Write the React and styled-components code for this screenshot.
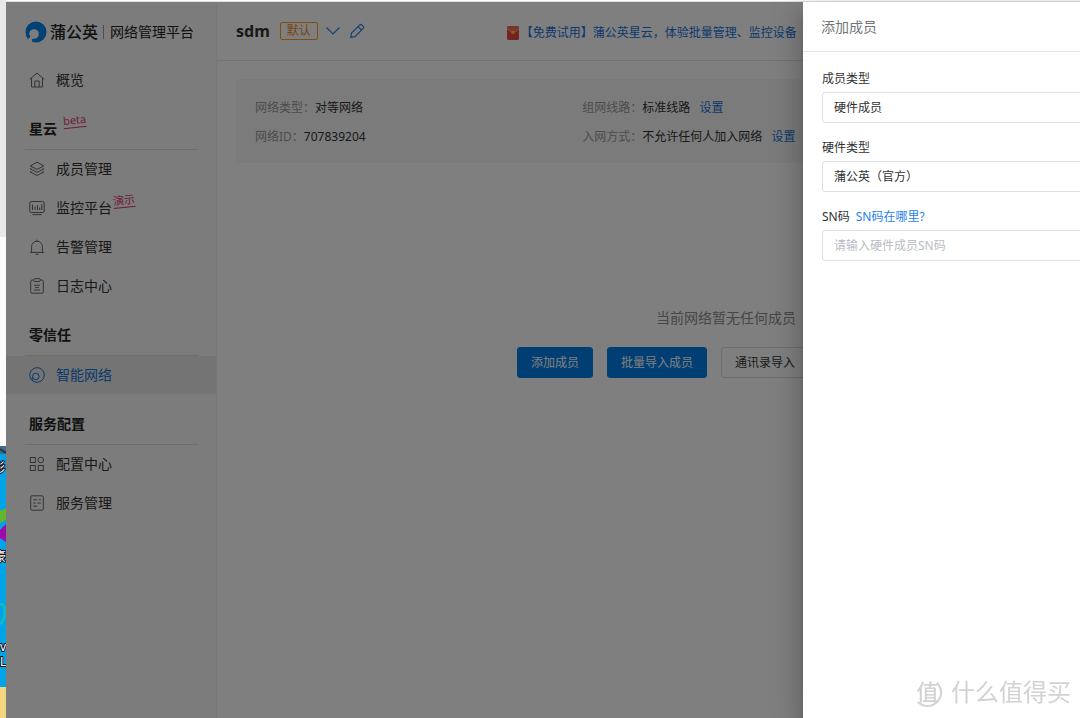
import React, { useState } from "react";
import styled, { createGlobalStyle } from "styled-components";

const GlobalStyle = createGlobalStyle`
  * {
    box-sizing: border-box;
  }

  html,
  body {
    margin: 0;
    overflow: hidden;
    background: #ffffff;
  }

  body,
  button,
  input,
  select {
    font-family: "Noto Sans", "Noto Sans CJK SC", sans-serif;
    font-size: 12px;
    line-height: 18px;
    color: #303133;
  }

  p,
  h1,
  h2,
  ul,
  dl,
  dd {
    margin: 0;
    padding: 0;
  }

  a {
    text-decoration: none;
  }
`;

const icons = {
  home: (
    <>
      <path d="M.8 7.3 8 1l7.2 6.3" />
      <path d="M2.5 6v9h11V6" />
      <path d="M5.8 15V9h4.4v6" />
    </>
  ),
  layers: (
    <>
      <path d="M8 1.2 14.8 4.8 8 8.4 1.2 4.8z" />
      <path d="M2.4 7 1.2 7.8 8 11.4l6.8-3.6-1.2-.8" />
      <path d="M2.4 10.1 1.2 10.9 8 14.5l6.8-3.6-1.2-.8" />
    </>
  ),
  monitor: (
    <>
      <rect x=".8" y="1.5" width="14.4" height="11" rx="1.5" />
      <path d="M3.5 4.5V10M6 6.5V10M8.5 5V10M10.7 7.5V10M12.8 4V10" />
      <path d="M3.5 14.6h9" />
    </>
  ),
  bell: (
    <>
      <path d="M2.6 13.3V7.6a5.4 5.4 0 0 1 10.8 0v5.7" />
      <path d="M1 13.4h14M8 .6v1.6M6.5 15.3h3" />
    </>
  ),
  clipboard: (
    <>
      <rect x="1.7" y="2" width="12.6" height="13.2" rx="1.5" />
      <rect x="4.8" y=".7" width="6.4" height="2.8" rx="1" fill="#f9f9f9" />
      <path d="M5 7.2h6M6 9.6h4M5 12h6" />
    </>
  ),
  network: (
    <>
      <circle cx="8" cy="8" r="7.3" />
      <circle cx="6.8" cy="9.4" r="3.3" />
      <path d="M3.5 9.6c-.5 1.4-.5 2.6-.1 4" />
    </>
  ),
  grid: (
    <>
      <rect x="1.3" y="1.5" width="5" height="5" />
      <circle cx="11.8" cy="4" r="2.8" />
      <rect x="1.3" y="9.5" width="5" height="5" />
      <rect x="9.3" y="9.5" width="5" height="5" />
    </>
  ),
  document: (
    <>
      <rect x="1.7" y=".8" width="12.6" height="14.4" rx="1.2" />
      <path d="M4.3 4.8h4M9.8 4.8h2M4.3 8h2.5M8.3 8h3.5M4.3 11.2h4" />
    </>
  ),
};

const menu = [
  { items: [{ label: "概览", icon: "home" }] },
  {
    title: "星云",
    mark: "beta",
    items: [
      { label: "成员管理", icon: "layers" },
      { label: "监控平台", icon: "monitor", mark: "演示" },
      { label: "告警管理", icon: "bell" },
      { label: "日志中心", icon: "clipboard" },
    ],
  },
  {
    title: "零信任",
    items: [{ label: "智能网络", icon: "network", active: true }],
  },
  {
    title: "服务配置",
    items: [
      { label: "配置中心", icon: "grid" },
      { label: "服务管理", icon: "document" },
    ],
  },
];

function MenuIcon({ name }) {
  return (
    <svg
      width="16"
      height="16"
      viewBox="0 0 16 16"
      fill="none"
      stroke="currentColor"
      strokeWidth="1"
    >
      {icons[name]}
    </svg>
  );
}

function Desktop() {
  return (
    <DesktopStyled aria-hidden="true">
      <svg width="6" height="272" viewBox="0 0 6 272">
        <rect width="6" height="272" fill="#00a2e8" />
        <rect width="6" height="8" fill="#3b6c92" />
        <path d="M0 3 6 7" stroke="#333" strokeWidth="2" />
        <text x="-7" y="26">
          影
        </text>
        <path d="M6 62 0 65v12l6-3z" fill="#63b52c" />
        <path d="M6 78 0 84v8l6 4z" fill="#a00aa8" />
        <text x="-6" y="115">
          豪
        </text>
        <path
          d="M0 158c4 0 5 3 5 7s-1 10-5 13"
          fill="none"
          stroke="#12b8c4"
          strokeWidth="3"
        />
        <text x="-7" y="205">
          ov
        </text>
        <text x="0" y="220">
          L
        </text>
        <rect y="241" width="6" height="31" fill="#f3d680" />
      </svg>
    </DesktopStyled>
  );
}

function Sidebar() {
  return (
    <SidebarStyled>
      <Brand>
        <svg width="22" height="22" viewBox="0 0 22 22">
          <circle cx="11" cy="11" r="10.5" fill="#0084e8" />
          <circle cx="9" cy="13" r="4.8" fill="#f9f9f9" />
          <path
            d="M5.4 15.2 3 18l3.4 3 1-.4-.6-2.2 2-1.4z"
            fill="#f9f9f9"
          />
          <path d="M.9 14.2 4.6 14l.6 2-2.4 1.8z" fill="#0084e8" />
        </svg>
        <BrandName>蒲公英</BrandName>
        <BrandTitle>网络管理平台</BrandTitle>
      </Brand>
      <nav>
        {menu.map((section, index) => (
          <section key={index}>
            {section.title && (
              <SectionTitle>
                {section.title}
                {section.mark && <Mark $heading>{section.mark}</Mark>}
              </SectionTitle>
            )}
            <MenuList>
              {section.items.map((item) => (
                <li key={item.label}>
                  <MenuLink href="#" $active={item.active}>
                    <MenuIcon name={item.icon} />
                    <span>
                      {item.label}
                      {item.mark && <Mark>{item.mark}</Mark>}
                    </span>
                  </MenuLink>
                </li>
              ))}
            </MenuList>
          </section>
        ))}
      </nav>
    </SidebarStyled>
  );
}

function Header() {
  return (
    <HeaderStyled>
      <h1>sdm</h1>
      <Tag>默认</Tag>
      <IconButton aria-label="切换网络">
        <svg width="16" height="16" viewBox="0 0 16 16">
          <path d="M1.5 4.5 8 11l6.5-6.5" />
        </svg>
      </IconButton>
      <IconButton aria-label="编辑">
        <svg width="16" height="16" viewBox="0 0 16 16">
          <path d="M1.8 14.3l.7-4.2 8-8a1.8 1.8 0 0 1 2.5 0l1 1a1.8 1.8 0 0 1 0 2.5l-8 8z" />
          <path d="M9 3.6 12.5 7" />
        </svg>
      </IconButton>
      <Promo href="#">
        <svg width="12" height="14" viewBox="0 0 12 14">
          <rect width="12" height="14" rx="1.5" fill="#e8473f" />
          <path
            d="M0 1.5C0 .6.6 0 1.5 0h9c.9 0 1.5.6 1.5 1.5V3L6 6.8 0 3z"
            fill="#f2685c"
          />
          <path d="M0 3 6 6.8 12 3" fill="none" stroke="#fbb59a" />
          <circle cx="6" cy="6.4" r="1.8" fill="#ffc233" />
        </svg>
        【免费试用】蒲公英星云，体验批量管理、监控设备
      </Promo>
    </HeaderStyled>
  );
}

function Info({ label, value, action }) {
  return (
    <InfoStyled>
      <dt>{label}：</dt>
      <dd>{value}</dd>
      {action && (
        <dd>
          <a href="#">{action}</a>
        </dd>
      )}
    </InfoStyled>
  );
}

function MemberDrawer() {
  const [memberType, setMemberType] = useState("hardware");
  const [hardwareType, setHardwareType] = useState("official");
  const [sn, setSn] = useState("");

  return (
    <DrawerStyled>
      <DrawerHeader>添加成员</DrawerHeader>
      <DrawerForm>
        <Field>
          <label htmlFor="memberType">成员类型</label>
          <Select
            id="memberType"
            value={memberType}
            onChange={(e) => setMemberType(e.target.value)}
          >
            <option value="hardware">硬件成员</option>
          </Select>
        </Field>
        <Field>
          <label htmlFor="hardwareType">硬件类型</label>
          <Select
            id="hardwareType"
            value={hardwareType}
            onChange={(e) => setHardwareType(e.target.value)}
          >
            <option value="official">蒲公英（官方）</option>
          </Select>
        </Field>
        <Field>
          <div>
            <label htmlFor="sn">SN码</label>
            <a href="#">SN码在哪里?</a>
          </div>
          <Input
            id="sn"
            value={sn}
            placeholder="请输入硬件成员SN码"
            onChange={(e) => setSn(e.target.value)}
          />
        </Field>
      </DrawerForm>
    </DrawerStyled>
  );
}

function App() {
  return (
    <>
      <GlobalStyle />
      <Viewport>
        <Screen>
          <Desktop />
          <Browser>
            <Sidebar />
            <Main>
              <Header />
              <Card>
                <dl>
                  <Info label="网络类型" value="对等网络" />
                  <Info label="网络ID" value="707839204" />
                </dl>
                <dl>
                  <Info label="组网线路" value="标准线路" action="设置" />
                  <Info
                    label="入网方式"
                    value="不允许任何人加入网络"
                    action="设置"
                  />
                </dl>
              </Card>
              <Empty>
                <p>当前网络暂无任何成员</p>
                <Actions>
                  <Button $primary>添加成员</Button>
                  <Button $primary>批量导入成员</Button>
                  <Button>通讯录导入</Button>
                </Actions>
              </Empty>
            </Main>
            <Overlay />
            <MemberDrawer />
          </Browser>
        </Screen>
      </Viewport>
      <Watermark>
        <span>值</span>
        什么值得买
      </Watermark>
    </>
  );
}

const Viewport = styled.div`
  overflow: hidden;
`;

// the console never gets narrower than this, the rest is clipped
const Screen = styled.div`
  display: flex;
  min-width: 1235px;
  min-height: 100vh;
`;

const DesktopStyled = styled.div`
  flex: none;
  display: flex;
  flex-direction: column;
  justify-content: flex-end;
  width: 6px;
  background: linear-gradient(#e9e9e9 237px, #fcfcfc 237px);

  svg {
    display: block;
    overflow: hidden;
  }

  text {
    font-size: 12px;
    fill: #ffffff;
    stroke: #111111;
    stroke-width: 2px;
    paint-order: stroke;
  }
`;

const Browser = styled.div`
  position: relative;
  flex: 1;
  display: flex;
  margin-top: 1px;
  border-top: 1px solid #dcdfdf;
`;

const SidebarStyled = styled.aside`
  flex: none;
  width: 211px;
  background: #f9f9f9;
  border-right: 1px solid #f1f1f1;
`;

const Brand = styled.div`
  display: flex;
  align-items: center;
  height: 59px;
  padding-left: 19px;
  color: #222222;
`;

const BrandName = styled.strong`
  margin-left: 3px;
  padding-right: 5px;
  font-size: 16px;
  font-weight: 500;
`;

const BrandTitle = styled.span`
  padding-left: 6px;
  border-left: 1px solid #999999;
  font-size: 14px;
  line-height: 14px;
`;

const MenuList = styled.ul`
  display: grid;
  gap: 1px;
  list-style: none;
`;

const MenuLink = styled.a`
  display: flex;
  align-items: center;
  gap: 11px;
  height: 38px;
  padding-left: 23px;
  font-size: 14px;
  color: ${({ $active }) => ($active ? "#1573d8" : "#333333")};
  background: ${({ $active }) => ($active ? "#e8e8e8" : "transparent")};

  span {
    position: relative;
  }

  svg {
    color: ${({ $active }) => ($active ? "#1573d8" : "#666666")};
  }
`;

const SectionTitle = styled.h2`
  position: relative;
  display: flex;
  align-items: flex-end;
  height: 51px;
  margin: 0 18px 0 19px;
  padding: 0 0 10px 4px;
  border-bottom: 1px solid #dcdcdc;
  font-size: 14px;
  line-height: 20px;
  font-weight: 700;
  color: #222222;
`;

const Mark = styled.sup`
  position: absolute;
  left: ${({ $heading }) => ($heading ? "38px" : "57px")};
  top: ${({ $heading }) => ($heading ? "14px" : "-6px")};
  border-bottom: 1px solid #e0376f;
  font-size: 11px;
  line-height: 14px;
  font-weight: 400;
  white-space: nowrap;
  color: #e0376f;
  transform: rotate(-6deg);
`;

const Main = styled.main`
  flex: 1;
  min-width: 0;
  background: #ffffff;
`;

const HeaderStyled = styled.header`
  display: flex;
  align-items: center;
  height: 59px;
  padding-left: 19px;
  border-bottom: 1px solid #e4e4e4;

  h1 {
    margin-right: 10px;
    font-size: 16px;
    font-weight: 700;
  }
`;

const Tag = styled.span`
  margin-right: 7px;
  padding: 0 6px;
  border: 1px solid #ff9c1a;
  border-radius: 2px;
  line-height: 16px;
  color: #f08a24;
`;

const IconButton = styled.button`
  display: flex;
  margin-right: 8px;
  padding: 0;
  border: 0;
  background: none;

  svg {
    fill: none;
    stroke: #2f7fe0;
    stroke-width: 1.2;
  }
`;

const Promo = styled.a`
  display: flex;
  align-items: center;
  gap: 2px;
  margin-left: 134px;
  padding-top: 4px;
  white-space: nowrap;
  color: #1573d8;
`;

const Card = styled.div`
  display: grid;
  grid-template-columns: repeat(3, 1fr);
  gap: 40px;
  margin: 18px 19px 0;
  padding: 19px 19px 17px;
  border-radius: 4px;
  background: #f7f7f7;

  dl {
    display: grid;
    gap: 10px;
  }
`;

const InfoStyled = styled.div`
  display: flex;
  gap: 9px;
  line-height: 19px;
  white-space: nowrap;

  dt {
    margin-right: -9px;
    color: #999999;
  }

  a {
    color: #1573d8;
  }
`;

const Empty = styled.div`
  width: 418px;
  margin: 145px auto 0;

  p {
    font-size: 14px;
    line-height: 20px;
    text-align: center;
    color: #8c8c8c;
  }
`;

const Actions = styled.div`
  display: flex;
  gap: 14px;
  margin-top: 19px;
`;

const Button = styled.button`
  height: 31px;
  padding: 0 13px;
  border: 1px solid ${({ $primary }) => ($primary ? "#007ce6" : "#dcdcdc")};
  border-radius: 3px;
  white-space: nowrap;
  color: ${({ $primary }) => ($primary ? "#ffffff" : "#333333")};
  background: ${({ $primary }) => ($primary ? "#007ce6" : "#ffffff")};
`;

const Overlay = styled.div`
  position: absolute;
  inset: 0;
  background: rgba(0, 0, 0, 0.5);
`;

const DrawerStyled = styled.aside`
  position: absolute;
  top: 0;
  right: 0;
  bottom: 0;
  width: 432px;
  background: #ffffff;
  box-shadow: 0 8px 10px -5px rgba(0, 0, 0, 0.2),
    0 16px 24px 2px rgba(0, 0, 0, 0.14), 0 6px 30px 5px rgba(0, 0, 0, 0.12);
`;

const DrawerHeader = styled.h2`
  height: 50px;
  padding-left: 18px;
  border-bottom: 1px solid #e4e4e4;
  font-size: 14px;
  line-height: 50px;
  font-weight: 400;
  color: #72767b;
`;

const DrawerForm = styled.form`
  display: grid;
  gap: 16px;
  padding: 18px 19px;
`;

const Field = styled.div`
  display: grid;
  gap: 4px;

  a {
    margin-left: 6px;
    color: #1f7ff0;
  }
`;

const Input = styled.input`
  width: 100%;
  height: 31px;
  padding: 0 11px;
  border: 1px solid #dcdfe6;
  border-radius: 3px;
  background: #ffffff;

  &::placeholder {
    color: #b8bcc6;
  }
`;

const Select = styled(Input).attrs({ as: "select" })`
  appearance: none;
`;

const Watermark = styled.div`
  position: fixed;
  right: 9px;
  bottom: 11px;
  display: flex;
  align-items: center;
  gap: 9px;
  font-size: 24px;
  line-height: 30px;
  color: #d2d2d2;

  span {
    width: 29px;
    height: 29px;
    border: 2px solid #d2d2d2;
    border-top-color: transparent;
    border-left-color: transparent;
    border-radius: 50%;
    font-size: 22px;
    line-height: 23px;
    font-weight: 500;
    text-align: center;
  }
`;

export default App;
